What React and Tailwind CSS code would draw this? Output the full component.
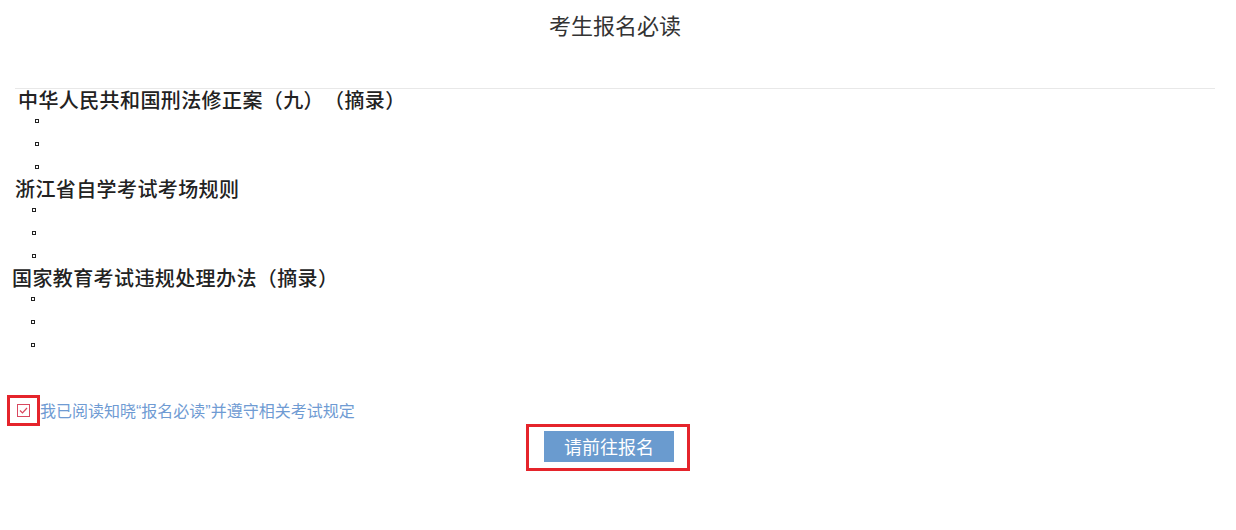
const sections = [
  { title: "中华人民共和国刑法修正案（九）（摘录）", indent: "pl-[18px]", dotIndent: "pl-[35px]" },
  { title: "浙江省自学考试考场规则", indent: "pl-[15px]", dotIndent: "pl-[32px]" },
  { title: "国家教育考试违规处理办法（摘录）", indent: "pl-[12px]", dotIndent: "pl-[31px]" }
]

const font = { fontFamily: '"Noto Sans CJK SC", "Noto Sans", sans-serif' }
const quoteFont = { fontFamily: '"Liberation Sans", sans-serif' }

export default function App() {
  return (
    <div className="w-[1236px] h-[530px] bg-white text-[#333]" style={font}>
      <div className="h-[48px] flex items-center justify-center pr-[6px] text-[22px] text-[#333]">
        考生报名必读
      </div>

      <div className="mt-[40px] ml-[15px] mr-[21px] h-px bg-[#e8e8e8]" />

      <div className="mt-px">
        {sections.map(s => (
          <div key={s.title}>
            <div className={`h-[20px] leading-[20px] text-[20px] font-medium tracking-[0.4px] text-[#222] [text-spacing-trim:space-all] ${s.indent}`}>
              {s.title}
            </div>
            {[0, 1, 2].map(i => (
              <div key={i} className={`h-[23px] ${s.dotIndent}`}>
                <div className="pt-[9px]">
                  <div className="w-[4px] h-[4px] border border-[#222]" />
                </div>
              </div>
            ))}
          </div>
        ))}
      </div>

      <div className="mt-[38px] flex items-center">
        <div className="ml-[7px] w-[33px] h-[31px] border-[3px] border-[#e5242b] flex items-center justify-center">
          <svg width="13" height="13" viewBox="0 0 13 13">
            <rect x="0.5" y="0.5" width="12" height="12" fill="white" stroke="#d9485f" strokeWidth="1" />
            <path d="M3 6.5 L5.5 9 L10 4" fill="none" stroke="#d9485f" strokeWidth="1.2" />
          </svg>
        </div>
        <span className="text-[16px] text-[#6f9bd3]">
          我已阅读知晓<span style={quoteFont}>“</span>报名必读<span style={quoteFont}>”</span>并遵守相关考试规定
        </span>
      </div>

      <div className="-mt-[2px] flex justify-center pr-[20px]">
        <div className="border-[3px] border-[#e5242b] pl-[15px] pr-[13px] pt-[4px] pb-[6px]">
          <button className="w-[130px] h-[31px] bg-[#6a9bcf] text-white text-[18px] leading-[31px]">
            请前往报名
          </button>
        </div>
      </div>
    </div>
  )
}
